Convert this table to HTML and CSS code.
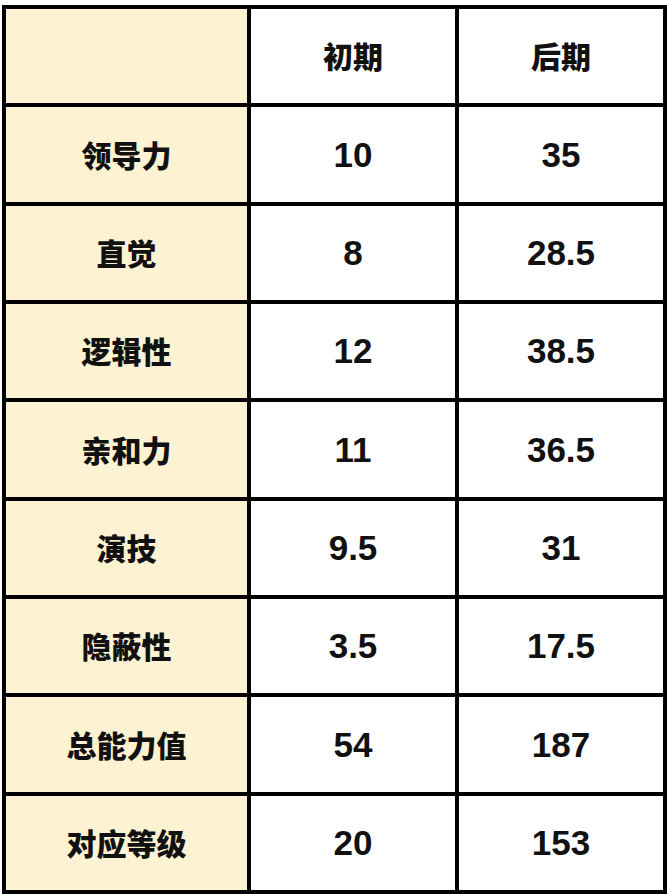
FILE: index.html
```html
<!DOCTYPE html>
<html lang="zh">
<head>
<meta charset="utf-8">
<link rel="stylesheet" href="styles.css">
</head>
<body>
<table class="stats">
  <colgroup>
    <col class="c-label">
    <col class="c-val">
    <col class="c-val">
  </colgroup>
  <tr><th class="label"></th><th>初期</th><th>后期</th></tr>
  <tr><th class="label">领导力</th><td>10</td><td>35</td></tr>
  <tr><th class="label">直觉</th><td>8</td><td>28.5</td></tr>
  <tr><th class="label">逻辑性</th><td>12</td><td>38.5</td></tr>
  <tr><th class="label">亲和力</th><td>11</td><td>36.5</td></tr>
  <tr><th class="label">演技</th><td>9.5</td><td>31</td></tr>
  <tr><th class="label">隐蔽性</th><td>3.5</td><td>17.5</td></tr>
  <tr><th class="label">总能力值</th><td>54</td><td>187</td></tr>
  <tr><th class="label">对应等级</th><td>20</td><td>153</td></tr>
</table>
</body>
</html>
```

FILE: styles.css
```css
html, body {
  margin: 0;
  padding: 0;
  background: #ffffff;
}
body {
  padding: 5px 0 0 2px;
}
.stats {
  border-collapse: separate;
  border-spacing: 4px;
  background: #000000;
  width: 665px;
  table-layout: fixed;
}
.c-label { width: 241px; }
.c-val { width: 204px; }
.stats th, .stats td {
  padding: 0;
  height: 94px;
  text-align: center;
  vertical-align: middle;
  background: #ffffff;
  color: #111111;
}
.stats th {
  font-family: "Noto Sans CJK SC", "Noto Sans", sans-serif;
  font-weight: 900;
  font-size: 30px;
  line-height: 30px;
  padding-bottom: 2px;
  height: 92px;
}
.stats td {
  font-family: "Liberation Sans", Arial, sans-serif;
  font-weight: 700;
  font-size: 35px;
}
.stats th.label {
  background: #fdf2d1;
}
.stats tr:nth-child(2) td,
.stats tr:nth-child(5) td,
.stats tr:nth-child(8) td {
  height: 95px;
}
.stats tr:nth-child(2) th,
.stats tr:nth-child(5) th,
.stats tr:nth-child(8) th {
  height: 93px;
}
```
